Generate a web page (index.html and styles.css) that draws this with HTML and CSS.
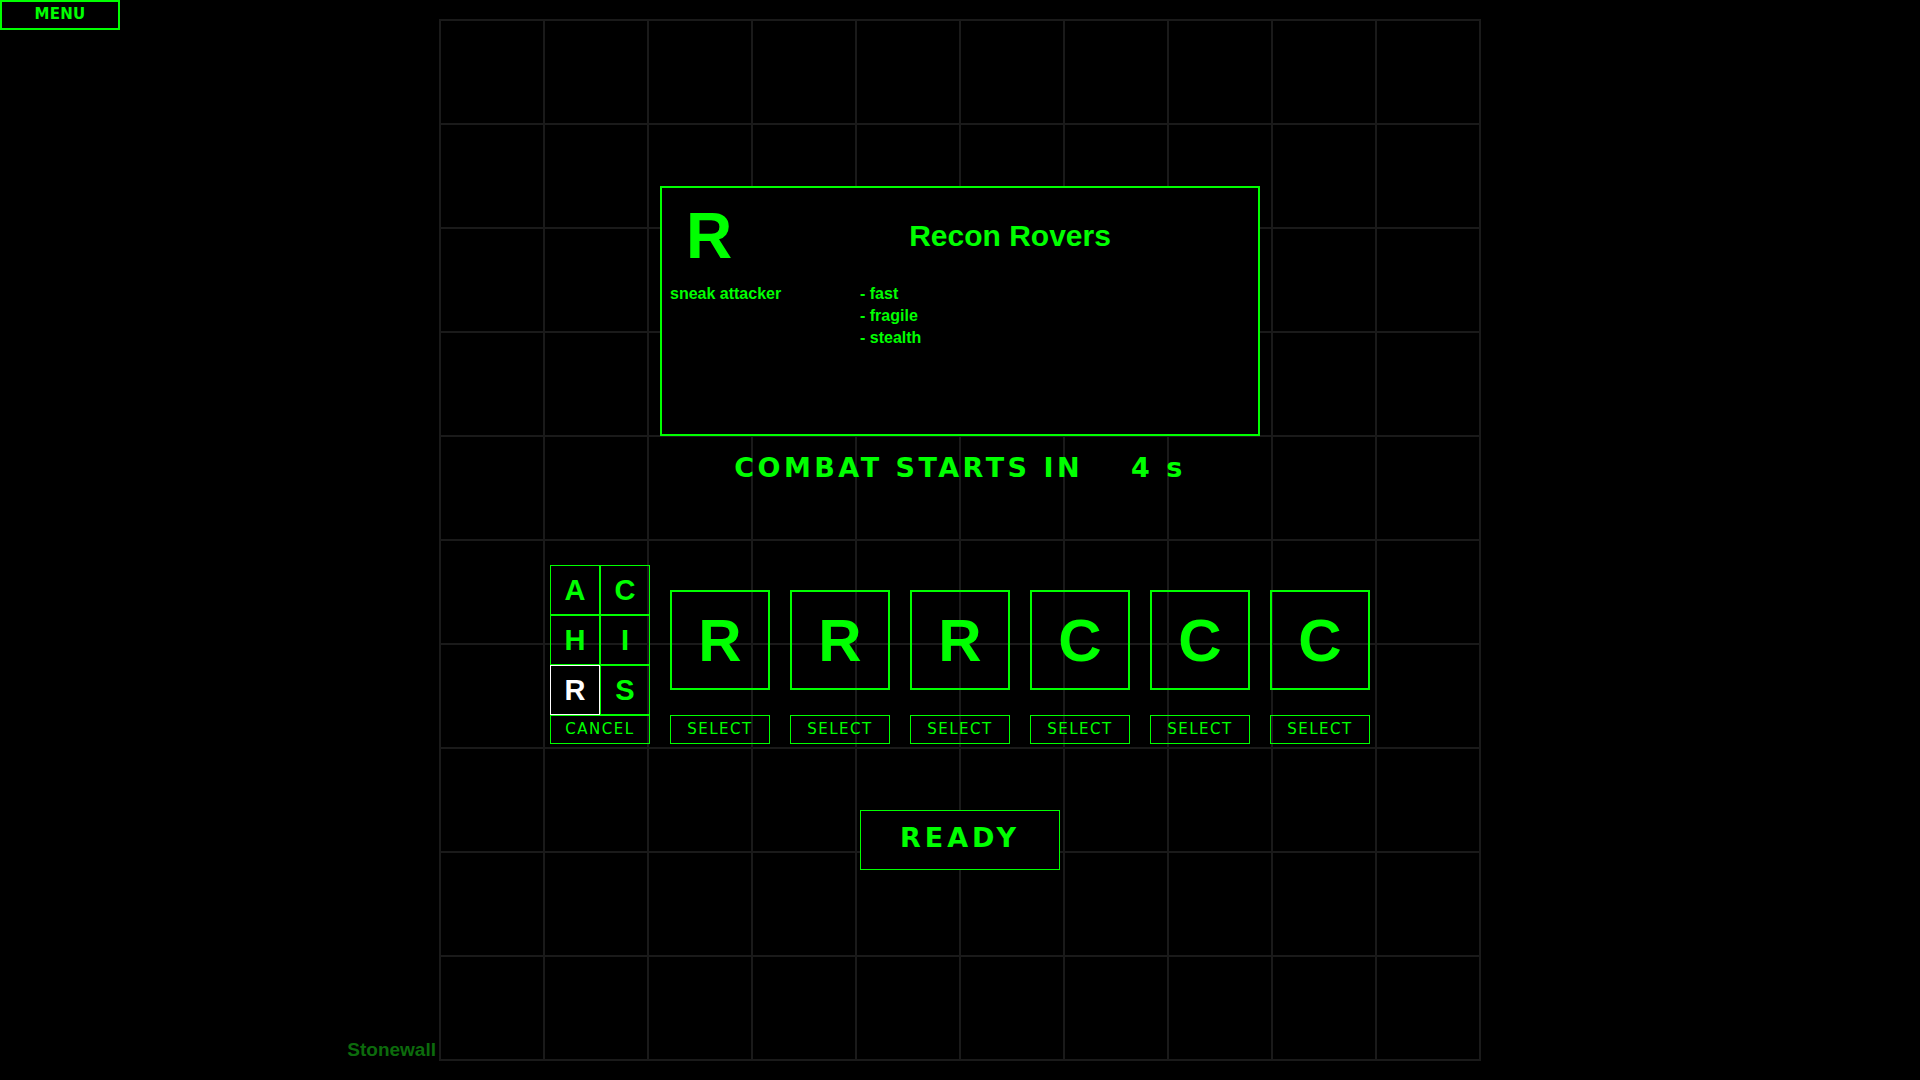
FILE: index.html
```html
<!DOCTYPE html>
<html lang="en">
<head>
    <meta charset="UTF-8">
    <meta name="viewport" content="width=device-width, initial-scale=1.0">
    <title>Squad Setup</title>
    <link rel="stylesheet" href="styles.css">
</head>
<body>
    <button class="menu-btn">MENU</button>

    <main class="board">
        <div class="unit-info">
            <div class="info-head">
                <div class="info-letter">R</div>
                <div class="info-name">Recon Rovers</div>
            </div>
            <div class="info-body">
                <div class="info-role">sneak attacker</div>
                <ul class="info-traits">
                    <li>- fast</li>
                    <li>- fragile</li>
                    <li>- stealth</li>
                </ul>
            </div>
        </div>

        <div class="countdown">
            <span>COMBAT STARTS IN</span><span class="countdown-time">4 s</span>
        </div>

        <div class="squad">
            <div class="picker">
                <div class="picker-grid">
                    <div class="pick">A</div>
                    <div class="pick">C</div>
                    <div class="pick">H</div>
                    <div class="pick">I</div>
                    <div class="pick picked">R</div>
                    <div class="pick">S</div>
                </div>
                <button class="small-btn">CANCEL</button>
            </div>

            <div class="slot">
                <div class="slot-tile">R</div>
                <button class="small-btn">SELECT</button>
            </div>
            <div class="slot">
                <div class="slot-tile">R</div>
                <button class="small-btn">SELECT</button>
            </div>
            <div class="slot">
                <div class="slot-tile">R</div>
                <button class="small-btn">SELECT</button>
            </div>
            <div class="slot">
                <div class="slot-tile">C</div>
                <button class="small-btn">SELECT</button>
            </div>
            <div class="slot">
                <div class="slot-tile">C</div>
                <button class="small-btn">SELECT</button>
            </div>
            <div class="slot">
                <div class="slot-tile">C</div>
                <button class="small-btn">SELECT</button>
            </div>
        </div>

        <button class="ready-btn">READY</button>

        <div class="player-name">Stonewall</div>
    </main>
</body>
</html>
```

FILE: styles.css
```css
body {
    margin: 0;
    padding: 0;
    background: #000;
    color: #00ff00;
    font-family: "Liberation Sans", Arial, sans-serif;
}
button {
    background: #000;
    color: #00ff00;
    padding: 0;
    cursor: pointer;
    font-family: "DejaVu Sans", sans-serif;
}
.menu-btn {
    position: fixed;
    top: 0;
    left: 0;
    width: 120px;
    height: 30px;
    border: 2px solid #00ff00;
    padding-bottom: 2px;
    font-size: 15px;
    font-weight: bold;
    line-height: 24px;
    letter-spacing: 0.3px;
    z-index: 10;
}

/* play field, 10 x 10 cells of 104px */
.board {
    position: relative;
    width: 1042px;
    height: 1042px;
    margin: 19px auto 0;
    padding-top: 167px;
    box-sizing: border-box;
    display: flex;
    flex-direction: column;
    align-items: center;
    background-image:
        linear-gradient(90deg, #1a1a1a 2px, transparent 2px),
        linear-gradient(#1a1a1a 2px, transparent 2px);
    background-size: 104px 104px;
}

.unit-info {
    width: 600px;
    height: 250px;
    box-sizing: border-box;
    border: 2px solid #00ff00;
    background: #000;
    padding: 16px 8px 0;
    font-weight: bold;
}
.info-head {
    display: flex;
    align-items: center;
    height: 64px;
}
.info-letter {
    width: 100px;
    padding-left: 16px;
    box-sizing: border-box;
    font-size: 64px;
    line-height: 64px;
}
.info-name {
    flex: 1;
    text-align: center;
    font-size: 30px;
    line-height: 30px;
}
.info-body {
    display: grid;
    grid-template-columns: 190px 1fr;
    margin-top: 15px;
    font-size: 16px;
    line-height: 22px;
}
.info-traits {
    margin: 0;
    padding: 0;
    list-style: none;
}

.countdown {
    margin-top: 18px;
    font-family: "DejaVu Sans", sans-serif;
    font-weight: bold;
    font-size: 27px;
    line-height: 27px;
    letter-spacing: 3.5px;
}
.countdown-time {
    margin-left: 48px;
}

.squad {
    display: flex;
    align-items: flex-end;
    gap: 20px;
    margin-top: 84px;
}
.picker {
    display: flex;
    flex-direction: column;
}
.picker-grid {
    display: grid;
    grid-template-columns: 50px 50px;
    grid-auto-rows: 50px;
}
.pick {
    border: 1px solid #00ff00;
    display: flex;
    align-items: center;
    justify-content: center;
    font-size: 29px;
    font-weight: bold;
}
.pick.picked {
    border-color: #fff;
    color: #fff;
}
.slot {
    display: flex;
    flex-direction: column;
    gap: 25px;
}
.slot-tile {
    width: 100px;
    height: 100px;
    box-sizing: border-box;
    border: 2px solid #00ff00;
    display: flex;
    align-items: center;
    justify-content: center;
    font-size: 60px;
    font-weight: bold;
}
.small-btn {
    width: 100px;
    height: 29px;
    border: 1px solid #00ff00;
    background: transparent;
    font-size: 15px;
    line-height: 27px;
    letter-spacing: 1.5px;
}

.ready-btn {
    width: 200px;
    height: 60px;
    margin-top: 66px;
    border: 1px solid #00ff00;
    padding-bottom: 5px;
    font-size: 27px;
    font-weight: bold;
    line-height: 53px;
    letter-spacing: 4px;
}

.player-name {
    position: absolute;
    right: calc(100% + 3px);
    bottom: 2px;
    color: #0c6b0c;
    font-size: 19px;
    font-weight: bold;
    line-height: 18px;
}
```
